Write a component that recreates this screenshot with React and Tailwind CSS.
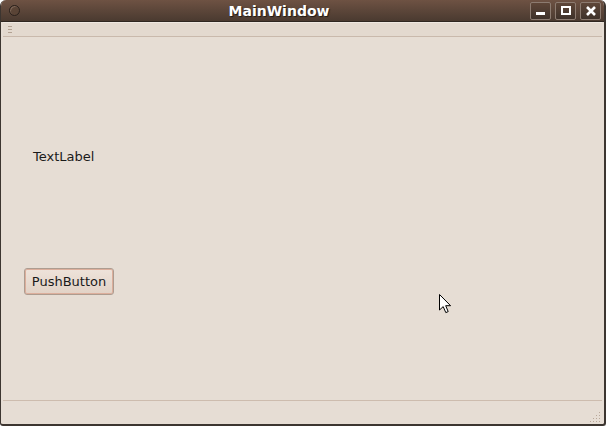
import React from "react";

const WinButton = ({ children }) => (
  <div className="w-[21px] h-[18px] rounded-[2px] border border-[#8c7b70] bg-gradient-to-b from-[#5e4638] to-[#3f322a] flex items-center justify-center">
    {children}
  </div>
);

const Cursor = () => (
  <svg width="14" height="22" viewBox="0 0 14 22" className="absolute left-[439px] top-[294px]">
    <path d="M0.5 0.5 L0.5 16 L4.2 12.6 L6.8 18.6 L9.2 17.6 L6.7 11.7 L11.6 11.7 Z" fill="#ffffff" stroke="#000000" strokeWidth="1" strokeLinejoin="round" />
  </svg>
);

export default function App() {
  return (
    <div className="w-[606px] h-[426px] bg-white relative" style={{ fontFamily: '"DejaVu Sans", sans-serif' }}>
      <div className="w-full h-full flex flex-col rounded-t-[6px] rounded-b-[3px] overflow-hidden border-l border-r-2 border-b-2 border-[#3c3530] bg-[#e6ddd4]">
        {/* Title bar */}
        <div className="h-[22px] shrink-0 flex items-center bg-gradient-to-b from-[#6e5243] to-[#4a3a30] border-b border-[#2f2620] relative">
          <div className="ml-[8px] w-[11px] h-[11px] rounded-full border border-[#2a211c] bg-[#5a4436] shadow-[inset_1px_1px_0_#7d6556]" />
          <div className="flex-1 text-center pl-[8px] text-white font-bold text-[14px] leading-none [text-shadow:1px_1px_1px_#1f1915]">
            MainWindow
          </div>
          <div className="flex gap-[4px] mr-[3px]">
            <WinButton>
              <div className="w-[9px] h-[3px] bg-white mt-[6px]" />
            </WinButton>
            <WinButton>
              <div className="w-[10px] h-[9px] border-2 border-white" />
            </WinButton>
            <WinButton>
              <svg width="10" height="10" viewBox="0 0 10 10">
                <path d="M1 1 L9 9 M9 1 L1 9" stroke="#ffffff" strokeWidth="2.6" />
              </svg>
            </WinButton>
          </div>
        </div>

        {/* Toolbar */}
        <div className="h-[15px] shrink-0 flex items-center bg-[#e3d9cf] border-t border-[#efe8e1] border-b border-b-[#c9b9ac] mx-[2px]">
          <div className="ml-[5px] flex flex-col gap-[2px]">
            <div className="w-[4px] h-[1px] bg-[#b3a293]" />
            <div className="w-[4px] h-[1px] bg-[#b3a293]" />
            <div className="w-[4px] h-[1px] bg-[#b3a293]" />
          </div>
        </div>

        {/* Central widget */}
        <div className="flex-1 flex flex-col items-start text-[13px] text-[#1a1a1a]">
          <div className="mt-[112px] ml-[32px] leading-[15px]">TextLabel</div>
          <button className="mt-[104px] ml-[23px] w-[90px] h-[27px] rounded-[3px] border border-[#ad9c90] bg-gradient-to-b from-[#eee3da] to-[#e2d2c6] shadow-[inset_0_0_0_1px_#dcae9b] text-[13px] text-[#1a1a1a] leading-none">
            PushButton
          </button>
        </div>

        {/* Status bar */}
        <div className="h-[24px] shrink-0 mx-[2px] border-t border-[#cdbcae] flex justify-end items-end">
          <svg width="12" height="12" viewBox="0 0 12 12" className="mb-[1px] mr-[1px]">
            {[
              [10, 2], [10, 5], [7, 5], [10, 8], [7, 8], [4, 8], [10, 11], [7, 11], [4, 11], [1, 11],
            ].map(([x, y], i) => (
              <rect key={i} x={x} y={y - 1} width="1" height="1" fill="#b9a899" />
            ))}
          </svg>
        </div>
      </div>
      <Cursor />
    </div>
  );
}
